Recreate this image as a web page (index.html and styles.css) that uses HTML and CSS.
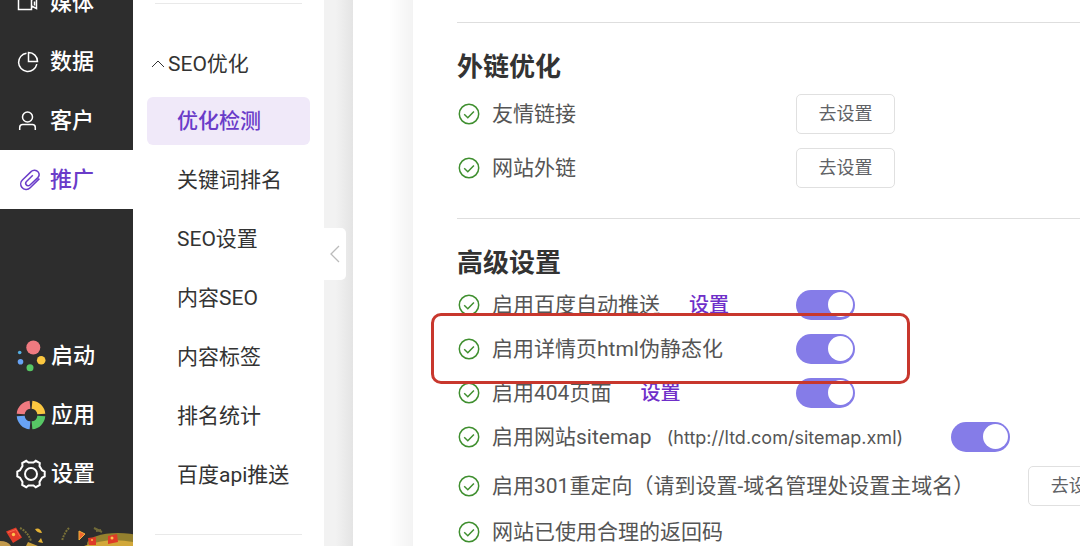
FILE: index.html
```html
<!DOCTYPE html>
<html lang="zh-CN">
<head>
<meta charset="UTF-8">
<meta name="viewport" content="width=device-width, initial-scale=1">
<title>优化检测</title>
<link rel="stylesheet" href="styles.css">
</head>
<body>
<svg class="sprite" aria-hidden="true">
    <symbol id="icon-check" viewBox="0 0 24 24">
        <circle cx="12" cy="12" r="9.7"/>
        <path d="M7.2 12.3l3.6 3.4 6.1-6.3"/>
    </symbol>
</svg>

<nav class="sidebar">
    <ul class="sidebar-top">
        <li><a href="#media">
            <svg viewBox="0 0 24 24"><path d="M2.500 3h13v15.500h-13zM15.500 9l5-2.500v11l-5-2.500M18.500 10.500v4"/></svg>媒体</a></li>
        <li><a href="#data">
            <svg viewBox="0 0 24 24"><path d="M10.500 3.200a9.200 9.200 0 1 0 10.300 11"/><path d="M12.500 2.500v9h9a9 9 0 0 0-9-9z"/></svg>数据</a></li>
        <li><a href="#customer">
            <svg viewBox="0 0 24 24"><circle cx="11.500" cy="8" r="5"/><path d="M3.700 21v-2.500q0-3 3-3h9.600q3 0 3 3V21"/></svg>客户</a></li>
        <li><a href="#promote" class="active">
            <svg viewBox="0 0 24 24"><path d="M23.400 10.600l-9.200 9.200a5.500 5.500 0 0 1-8.400-.6 5.500 5.500 0 0 1 .6-7.200l8.700-8.400a4.600 4.600 0 0 1 7 .3 4.600 4.600 0 0 1-.5 6L14 17a2.500 2.500 0 0 1-3.800-.2 2.500 2.500 0 0 1 .3-3.300l6.300-6.200"/></svg>推广</a></li>
    </ul>
    <ul class="sidebar-bottom">
        <li><a href="#launch">
            <svg class="color" viewBox="0 0 30 30">
                <circle cx="17.300" cy="6.500" r="7" fill="#f07a80"/>
                <circle cx="25.200" cy="19.200" r="4.300" fill="#fbc740"/>
                <circle cx="14" cy="26.800" r="3.500" fill="#57c765"/>
                <circle cx="4.500" cy="20.800" r="2.800" fill="#68a3f5"/>
                <circle cx="3.700" cy="11.500" r="1.800" fill="#55aee0"/>
            </svg>启动</a></li>
        <li><a href="#apps">
            <svg class="color" viewBox="0 0 30 30">
                <g fill="none" stroke-width="8">
                    <path stroke="#fbc740" d="M16 4.700A10.300 10.300 0 0 1 25.300 14"/>
                    <path stroke="#57c765" d="M25.300 16A10.300 10.300 0 0 1 16 25.300"/>
                    <path stroke="#68a3f5" d="M14 25.300A10.300 10.300 0 0 1 4.700 16"/>
                    <path stroke="#f07a80" d="M4.700 14A10.300 10.300 0 0 1 14 4.700"/>
                </g>
            </svg>应用</a></li>
        <li><a href="#settings">
            <svg class="color gear" viewBox="0 0 30 30">
                <path d="M10.200 1.800l2.300 1.800h5l2.300-1.800 4 2.200-.3 3 2.500 4.200 2.700 1.400v4.800l-2.700 1.400-2.500 4.200.3 3-4 2.200-2.300-1.800h-5l-2.300 1.800-4-2.200.3-3L4 18.800l-2.700-1.400v-4.800L4 11.200 6.500 7l-.3-3z"/>
                <circle cx="15" cy="15" r="6"/>
            </svg>设置</a></li>
    </ul>
    <svg class="festive" viewBox="0 0 133 20" preserveAspectRatio="xMinYMax slice" aria-hidden="true">
        <ellipse cx="118" cy="18" rx="31" ry="11" fill="#94802e"/>
        <path d="M84 20q24-9 49-4v4z" fill="#d2a83a"/>
        <path d="M0 15q8 0 11 5H0z" fill="#c39a4c"/>
        <path d="M6 5.500l10-4 6 10-9 5.500z" fill="#e23b29"/>
        <path d="M8 6.500l8-3 4 7" fill="none" stroke="#f4674b"/>
        <circle cx="13.500" cy="8.500" r="1.700" fill="#ffc14d"/>
        <path d="M20 2q8 4 11 13M69 2q-5 5-7 13" fill="none" stroke="#797138" stroke-width="2" stroke-dasharray="2 1"/>
        <path d="M35 3q5-2 7 4-5 0-7-4zM38 16l3-4 2 5z" fill="#e6b334"/>
        <path d="M79 5l6 3-6 6z" fill="#ef6630" stroke="#f2b23b"/>
        <path d="M94 2l8 4M96 5l5-1" stroke="#716a38" stroke-width="2"/>
        <path d="M88 12l8-1v8h-7zM108 10l9-2 1 8-10 2z" fill="#df3b27"/>
        <circle cx="92" cy="14" r="1" fill="#ffc14d"/>
        <circle cx="112" cy="12" r="1.500" fill="#ffc14d"/>
        <path d="M26 20l2-4 10 4z" fill="#caa03c"/>
    </svg>
</nav>

<aside class="submenu">
    <hr>
    <h2><svg viewBox="0 0 14 10"><path d="M1 8l6-6 6 6"/></svg>SEO优化</h2>
    <ul>
        <li><a href="#check" class="active">优化检测</a></li>
        <li><a href="#keyword">关键词排名</a></li>
        <li><a href="#seo">SEO设置</a></li>
        <li><a href="#content-seo">内容SEO</a></li>
        <li><a href="#tags">内容标签</a></li>
        <li><a href="#rank">排名统计</a></li>
        <li><a href="#baidu">百度api推送</a></li>
    </ul>
    <hr>
</aside>

<div class="gutter">
    <button type="button" class="collapse" aria-label="收起">
        <svg viewBox="0 0 12 18"><path d="M10 1L2 9l8 8"/></svg>
    </button>
</div>
<div class="page-edge"></div>

<main class="content">
    <section>
        <h1>外链优化</h1>
        <div class="row">
            <svg class="check"><use href="#icon-check"/></svg>
            <span class="name">友情链接</span>
            <button type="button" class="btn">去设置</button>
        </div>
        <div class="row">
            <svg class="check"><use href="#icon-check"/></svg>
            <span class="name">网站外链</span>
            <button type="button" class="btn">去设置</button>
        </div>
    </section>
    <section>
        <h1>高级设置</h1>
        <div class="row">
            <svg class="check"><use href="#icon-check"/></svg>
            <span class="name"><label for="push">启用百度自动推送</label><a href="#push-set">设置</a></span>
            <input type="checkbox" class="switch" id="push" checked>
        </div>
        <div class="row marked">
            <svg class="check"><use href="#icon-check"/></svg>
            <span class="name"><label for="html">启用详情页html伪静态化</label></span>
            <input type="checkbox" class="switch" id="html" checked>
        </div>
        <div class="row">
            <svg class="check"><use href="#icon-check"/></svg>
            <span class="name"><label for="e404">启用404页面</label><a href="#404-set">设置</a></span>
            <input type="checkbox" class="switch" id="e404" checked>
        </div>
        <div class="row">
            <svg class="check"><use href="#icon-check"/></svg>
            <span class="name"><label for="sitemap">启用网站sitemap <small>(http://ltd.com/sitemap.xml)</small></label></span>
            <input type="checkbox" class="switch" id="sitemap" checked>
        </div>
        <div class="row">
            <svg class="check"><use href="#icon-check"/></svg>
            <span class="name wide">启用301重定向（请到设置-域名管理处设置主域名）</span>
            <button type="button" class="btn">去设置</button>
        </div>
        <div class="row">
            <svg class="check"><use href="#icon-check"/></svg>
            <span class="name">网站已使用合理的返回码</span>
        </div>
    </section>
</main>
</body>
</html>
```
FILE: styles.css
```css
*, *::before, *::after {
    box-sizing: border-box;
}
body {
    margin: 0;
    height: 100vh;
    overflow: hidden;
    display: flex;
    background: #fff;
    color: #555;
    font: 21px/24px Roboto, "Noto Sans CJK SC", sans-serif;
}
ul {
    list-style: none;
    margin: 0;
    padding: 0;
}
a {
    color: inherit;
    text-decoration: none;
}
svg {
    fill: none;
    stroke: currentColor;
    flex: none;
}
.sprite {
    position: absolute;
    width: 0;
    height: 0;
}

/* dark main menu */
.sidebar {
    flex: 0 0 133px;
    display: flex;
    flex-direction: column;
    background: #2d2d2d;
    color: #fff;
    font-size: 22px;
    font-weight: 500;
    overflow: hidden;
}
.sidebar-top {
    margin-top: -27px;
}
.sidebar-bottom {
    margin-top: auto;
}
.sidebar a {
    height: 59px;
    padding-left: 16px;
    display: flex;
    align-items: center;
    gap: 10px;
}
.sidebar a svg {
    width: 24px;
    height: 24px;
    stroke-width: 1.5;
    overflow: visible;
}
.sidebar a.active {
    background: #fff;
    color: #6a3cc9;
}
.sidebar-bottom a {
    gap: 5px;
}
.sidebar a .color {
    width: 30px;
    height: 30px;
    stroke: none;
}
.sidebar a .gear {
    stroke: #fff;
    stroke-width: 2;
}
.sidebar .festive {
    width: 100%;
    height: 20px;
    margin-top: 23px;
    stroke: none;
}

/* second level menu */
.submenu {
    flex: 0 0 191px;
    color: #333;
    padding-top: 3px;
}
.submenu hr {
    margin: 0 22px;
    border: 0;
    border-top: 1px solid #e9e9e9;
}
.submenu h2 {
    margin: 36px 0 0 18px;
    height: 48px;
    display: flex;
    align-items: center;
    gap: 3px;
    font-size: 21px;
    font-weight: 400;
}
.submenu h2 svg {
    width: 14px;
    height: 10px;
}
.submenu ul {
    display: grid;
    gap: 11px;
    padding: 9px 14px 35px;
}
.submenu li a {
    display: block;
    padding-left: 30px;
    line-height: 48px;
    border-radius: 6px;
}
.submenu li a.active {
    background: #f0e9f9;
    color: #6a3cc9;
    font-weight: 500;
}

.gutter {
    flex: 0 0 29px;
    display: flex;
    align-items: flex-start;
    background: linear-gradient(90deg, #f2f2f2 40%, #e4e4e4);
}
.collapse {
    width: 22px;
    height: 52px;
    margin-top: 228px;
    padding: 0;
    border: 0;
    border-radius: 0 5px 5px 0;
    background: #fff;
    color: #bbb;
    line-height: 0;
}
.collapse svg {
    width: 12px;
    height: 18px;
    stroke-width: 1.3;
}
.page-edge {
    flex: 0 0 60px;
    background: linear-gradient(90deg, #fff 60%, #f3f3f3);
}

.content {
    flex: 1;
    min-width: 0;
    padding: 22px 0 0 44px;
}
.content section {
    border-top: 1px solid #dedede;
    padding: 26px 0 30px;
}
.content h1 {
    margin: 0 0 9px;
    font-size: 26px;
    line-height: 36px;
    color: #333;
}
.row {
    display: flex;
    align-items: center;
    white-space: nowrap;
}
.row + .row {
    margin-top: 14px;
}
.check {
    width: 24px;
    height: 24px;
    margin-right: 11px;
    color: #3f8f2f;
    stroke-width: 1.5;
}
.name {
    flex: none;
    min-width: 304px;
    padding-right: 48px;
}
.name.wide {
    padding-right: 54px;
}
.name a {
    margin-left: 29px;
    font-size: 20px;
    font-weight: 500;
    color: #6f2fc9;
}
.name small {
    margin-left: 10px;
    font-family: Inter, sans-serif;
    font-size: 18px;
}
.btn {
    flex: none;
    width: 99px;
    height: 40px;
    border: 1px solid #e0e0e0;
    border-radius: 5px;
    background: #fff;
    color: #606266;
    font: 18px/24px Roboto, "Noto Sans CJK SC", sans-serif;
}
.switch {
    appearance: none;
    flex: none;
    width: 59px;
    height: 30px;
    margin: 0;
    padding: 2px;
    border-radius: 15px;
    background: #857ce8;
    display: flex;
}
.switch::before {
    content: "";
    width: 25px;
    height: 25px;
    border-radius: 50%;
    background: #fff;
}
.switch:checked {
    justify-content: flex-end;
}

/* callout drawn round a row, overlapping its neighbours */
.marked {
    position: relative;
}
.marked::after {
    content: "";
    position: absolute;
    top: -21px;
    bottom: -20px;
    left: -26px;
    width: 479px;
    border: 3px solid #c8372d;
    border-radius: 10px;
    pointer-events: none;
}
```
